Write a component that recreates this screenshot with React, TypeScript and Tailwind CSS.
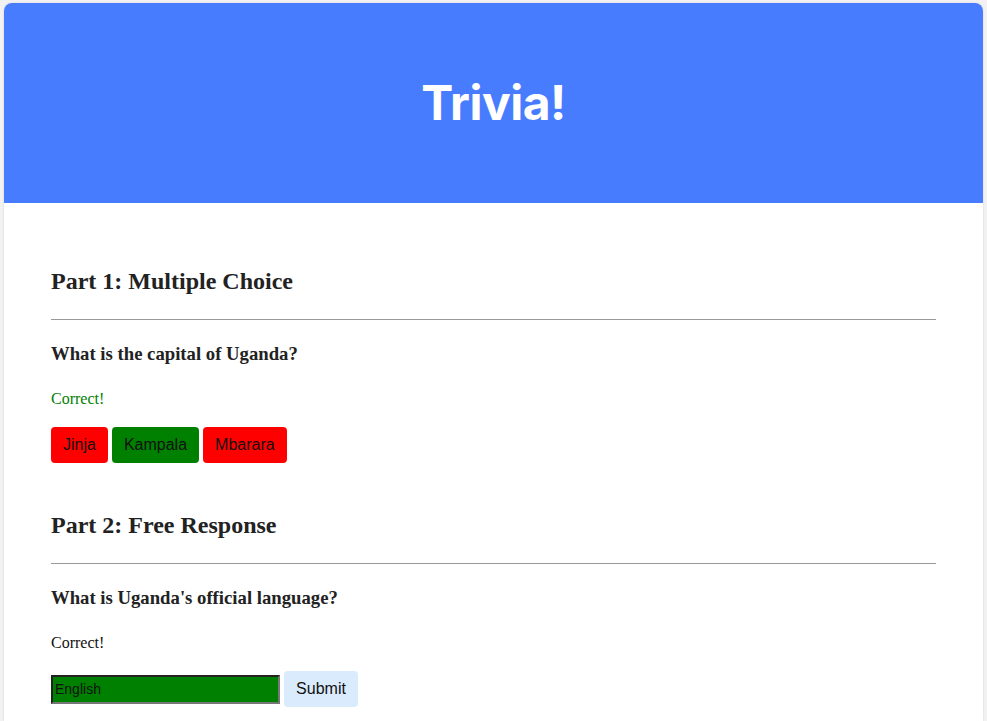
import React from "react";

export default function App() {
  return (
    <div className="min-h-[721px] bg-[#f2f2f2] pt-[3px] px-[4px]">
      <div className="mx-auto w-[979px] bg-white rounded-t-[8px] overflow-hidden shadow-[0_0_2px_rgba(0,0,0,0.15)] min-h-[718px]">
        <div className="h-[200px] bg-[#487cff] flex items-center justify-center">
          <h1 className="text-white text-[48px] font-bold font-['Inter',sans-serif] tracking-[-0.5px] leading-none">Trivia!</h1>
        </div>
        <div className="px-[47px] pt-[64px] font-['Liberation_Serif',serif] text-[#222]">
          <h2 className="text-[24px] font-bold leading-[28px] mb-[24px]">Part 1: Multiple Choice</h2>
          <hr className="border-0 border-t border-[#999] h-0" />
          <h3 className="text-[18.72px] font-bold leading-[22px] mt-[23px]">What is the capital of Uganda?</h3>
          <p className="text-[16px] leading-[18px] mt-[25px] text-[#008000]">Correct!</p>
          <div className="flex gap-[4px] mt-[19px] font-['Liberation_Sans',sans-serif] text-[16px]">
            <button className="h-[36px] px-[12px] rounded-[4px] bg-[#ff0000] text-[#111]">Jinja</button>
            <button className="h-[36px] px-[12px] rounded-[4px] bg-[#008000] text-[#111]">Kampala</button>
            <button className="h-[36px] px-[12px] rounded-[4px] bg-[#ff0000] text-[#111]">Mbarara</button>
          </div>
          <h2 className="text-[24px] font-bold leading-[28px] mt-[48px] mb-[24px]">Part 2: Free Response</h2>
          <hr className="border-0 border-t border-[#999] h-0" />
          <h3 className="text-[18.72px] font-bold leading-[22px] mt-[23px]">What is Uganda's official language?</h3>
          <p className="text-[16px] leading-[18px] mt-[25px] text-[#111]">Correct!</p>
          <div className="flex items-center gap-[4px] mt-[19px] font-['Liberation_Sans',sans-serif]">
            <input
              defaultValue="English"
              className="w-[229px] h-[29px] bg-[#008000] border-2 border-t-[#222] border-l-[#222] border-b-[#767676] border-r-[#767676] text-[14px] text-[#111] px-[2px] outline-none"
            />
            <button className="h-[36px] w-[74px] rounded-[4px] bg-[#d9ebfd] text-[16px] text-[#111]">Submit</button>
          </div>
        </div>
      </div>
    </div>
  );
}
